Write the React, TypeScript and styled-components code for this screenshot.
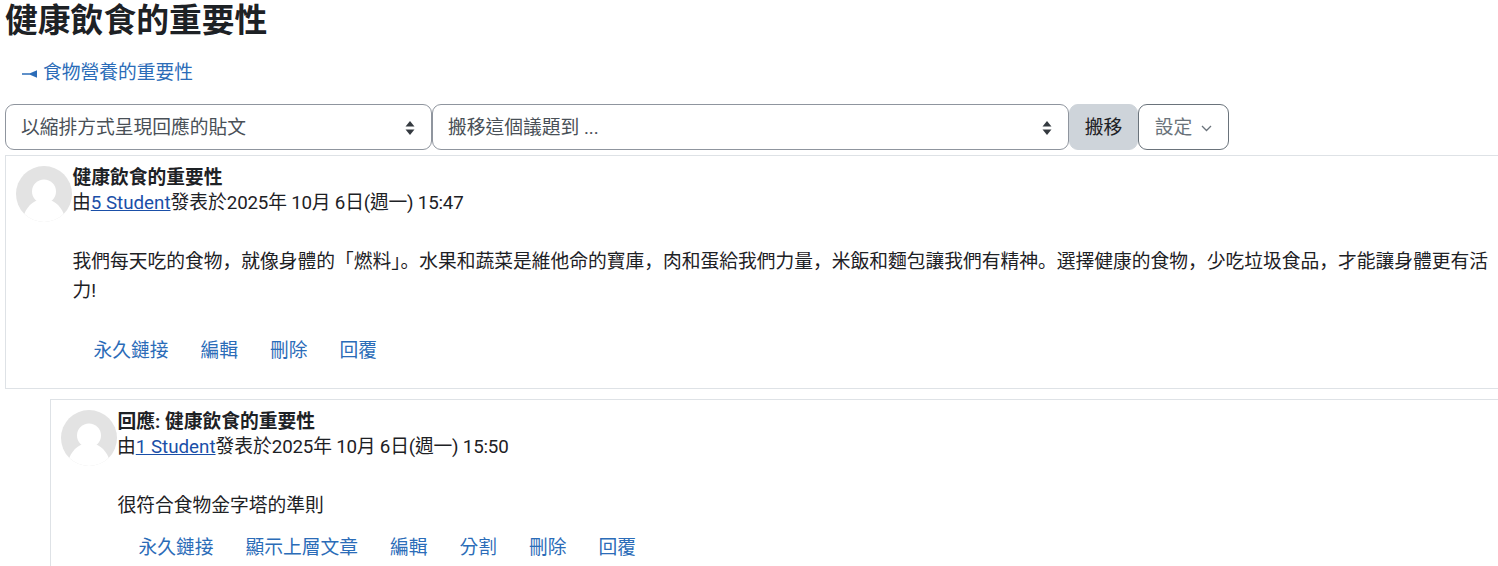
import React from "react";
import styled, { createGlobalStyle } from "styled-components";

const GlobalStyle = createGlobalStyle`
  html, body {
    margin: 0;
    padding: 0;
    background: #fff;
    overflow: hidden;
  }
  body {
    font-family: Roboto, "Noto Sans CJK TC", sans-serif;
    font-size: 18.75px;
    line-height: 25px;
    color: #1d2125;
  }
`;

const Page = styled.div`
  width: 1498px;
  height: 566px;
  overflow: hidden;
  padding-left: 5px;
  box-sizing: border-box;
`;

const Title = styled.h1`
  margin: 0;
  height: 42px;
  font-size: 32.8px;
  line-height: 42px;
  font-weight: 700;
`;

const BackRow = styled.div`
  display: flex;
  align-items: center;
  gap: 6px;
  height: 25px;
  margin: 19px 0 18px 17px;
`;

const BackLink = styled.a`
  color: #2b6cb8;
  text-decoration: none;
`;

const Toolbar = styled.div`
  display: flex;
  align-items: stretch;
  height: 46px;
`;

const Select = styled.div<{ $width: number }>`
  width: ${(p) => p.$width}px;
  box-sizing: border-box;
  display: flex;
  align-items: center;
  justify-content: space-between;
  padding: 2px 16px 0 15px;
  background: #fff;
  border: 1px solid #8f959e;
  border-radius: 9px;
  color: #495057;
`;

const MoveButton = styled.button`
  width: 69px;
  border: 1px solid #ced4da;
  border-radius: 9px;
  background: #ced4da;
  color: #1d2125;
  font: inherit;
  padding: 2px 0 0;
`;

const SettingsButton = styled.button`
  width: 91px;
  display: flex;
  align-items: center;
  justify-content: center;
  gap: 9px;
  border: 1px solid #6a737b;
  border-radius: 9px;
  background: #fff;
  color: #6a737b;
  font: inherit;
  padding: 2px 0 0;
`;

const Post = styled.div<{ $indent: number; $height: number; $top: number }>`
  box-sizing: border-box;
  margin: ${(p) => p.$top}px 0 0 ${(p) => p.$indent}px;
  height: ${(p) => p.$height}px;
  padding: 10px 5px 0 10px;
  border: 1px solid #dee2e6;
  border-right: 0;
  display: flex;
`;

const AvatarSlot = styled.div`
  flex: 0 0 56.5px;
`;

const Content = styled.div`
  flex: 1;
  min-width: 0;
`;

const PostTitle = styled.div`
  font-weight: 700;
  height: 25px;
`;

const Byline = styled.div`
  height: 25px;
  margin-left: -0.5px;
`;

const Author = styled.a`
  color: #1a4fa8;
  text-decoration: underline;
`;

const PostDate = styled.span`
  letter-spacing: -0.2px;
`;

/* JP cut: comma and full stop sit low-left, as in the reference */
const Message = styled.p<{ $height: number }>`
  margin: 32px 0 0;
  height: ${(p) => p.$height}px;
  font-family: Roboto, "Noto Sans CJK JP", sans-serif;
  line-height: 28.5px;
`;

const Actions = styled.div<{ $top: number }>`
  display: flex;
  gap: 32px;
  padding-left: 21px;
  margin-top: ${(p) => p.$top}px;
`;

const ActionLink = styled.a`
  color: #2b6cb8;
  text-decoration: none;
`;

function Avatar() {
  return (
    <svg width="56" height="56" viewBox="0 0 56 56">
      <defs>
        <clipPath id="avatar-clip">
          <circle cx="28" cy="28" r="28" />
        </clipPath>
      </defs>
      <circle cx="28" cy="28" r="28" fill="#e3e3e3" />
      <g clipPath="url(#avatar-clip)" fill="#fff">
        <circle cx="28" cy="25.5" r="12" />
        <path d="M6 56 C8 44 14 37 22 34 L34 34 C42 37 48 44 50 56 Z" />
      </g>
    </svg>
  );
}

function UpDown() {
  return (
    <svg width="10" height="16" viewBox="0 0 10 16" fill="#343a40">
      <path d="M5 1 L9.5 6.5 H0.5 Z" />
      <path d="M5 15 L9.5 9.5 H0.5 Z" />
    </svg>
  );
}

function Chevron() {
  return (
    <svg width="11" height="7" viewBox="0 0 11 7" fill="none" stroke="#6a737b" strokeWidth="1.3">
      <path d="M1 1 L5.5 5.5 L10 1" />
    </svg>
  );
}

function BackArrow() {
  return (
    <svg width="15" height="8" viewBox="0 0 15 8" fill="#2b6cb8">
      <path d="M0 3.3 H8 L15 0.3 V7.7 L8 4.7 H0 Z" />
    </svg>
  );
}

export default function App() {
  return (
    <Page>
      <GlobalStyle />
      <Title>健康飲食的重要性</Title>
      <BackRow>
        <BackArrow />
        <BackLink>食物營養的重要性</BackLink>
      </BackRow>
      <Toolbar>
        <Select $width={427}>
          以縮排方式呈現回應的貼文
          <UpDown />
        </Select>
        <Select $width={637}>
          搬移這個議題到 ...
          <UpDown />
        </Select>
        <MoveButton>搬移</MoveButton>
        <SettingsButton>
          設定
          <Chevron />
        </SettingsButton>
      </Toolbar>
      <Post $indent={0} $height={234} $top={5}>
        <AvatarSlot>
          <Avatar />
        </AvatarSlot>
        <Content>
          <PostTitle>健康飲食的重要性</PostTitle>
          <Byline>
            由<Author>5 Student</Author>發表於<PostDate>2025年 10月 6日(週一) 15:47</PostDate>
          </Byline>
          <Message $height={57}>
            {"我們每天吃的食物\uFF0C就像身體的「燃料」。水果和蔬菜是維他命的寶庫\uFF0C肉和蛋給我們力量\uFF0C米飯和麵包讓我們有精神。選擇健康的食物\uFF0C少吃垃圾食品\uFF0C才能讓身體更有活力!"}
          </Message>
          <Actions $top={34}>
            <ActionLink>永久鏈接</ActionLink>
            <ActionLink>編輯</ActionLink>
            <ActionLink>刪除</ActionLink>
            <ActionLink>回覆</ActionLink>
          </Actions>
        </Content>
      </Post>
      <Post $indent={45} $height={180} $top={10}>
        <AvatarSlot>
          <Avatar />
        </AvatarSlot>
        <Content>
          <PostTitle>回應: 健康飲食的重要性</PostTitle>
          <Byline>
            由<Author>1 Student</Author>發表於<PostDate>2025年 10月 6日(週一) 15:50</PostDate>
          </Byline>
          <Message $height={29}>很符合食物金字塔的準則</Message>
          <Actions $top={15}>
            <ActionLink>永久鏈接</ActionLink>
            <ActionLink>顯示上層文章</ActionLink>
            <ActionLink>編輯</ActionLink>
            <ActionLink>分割</ActionLink>
            <ActionLink>刪除</ActionLink>
            <ActionLink>回覆</ActionLink>
          </Actions>
        </Content>
      </Post>
    </Page>
  );
}
